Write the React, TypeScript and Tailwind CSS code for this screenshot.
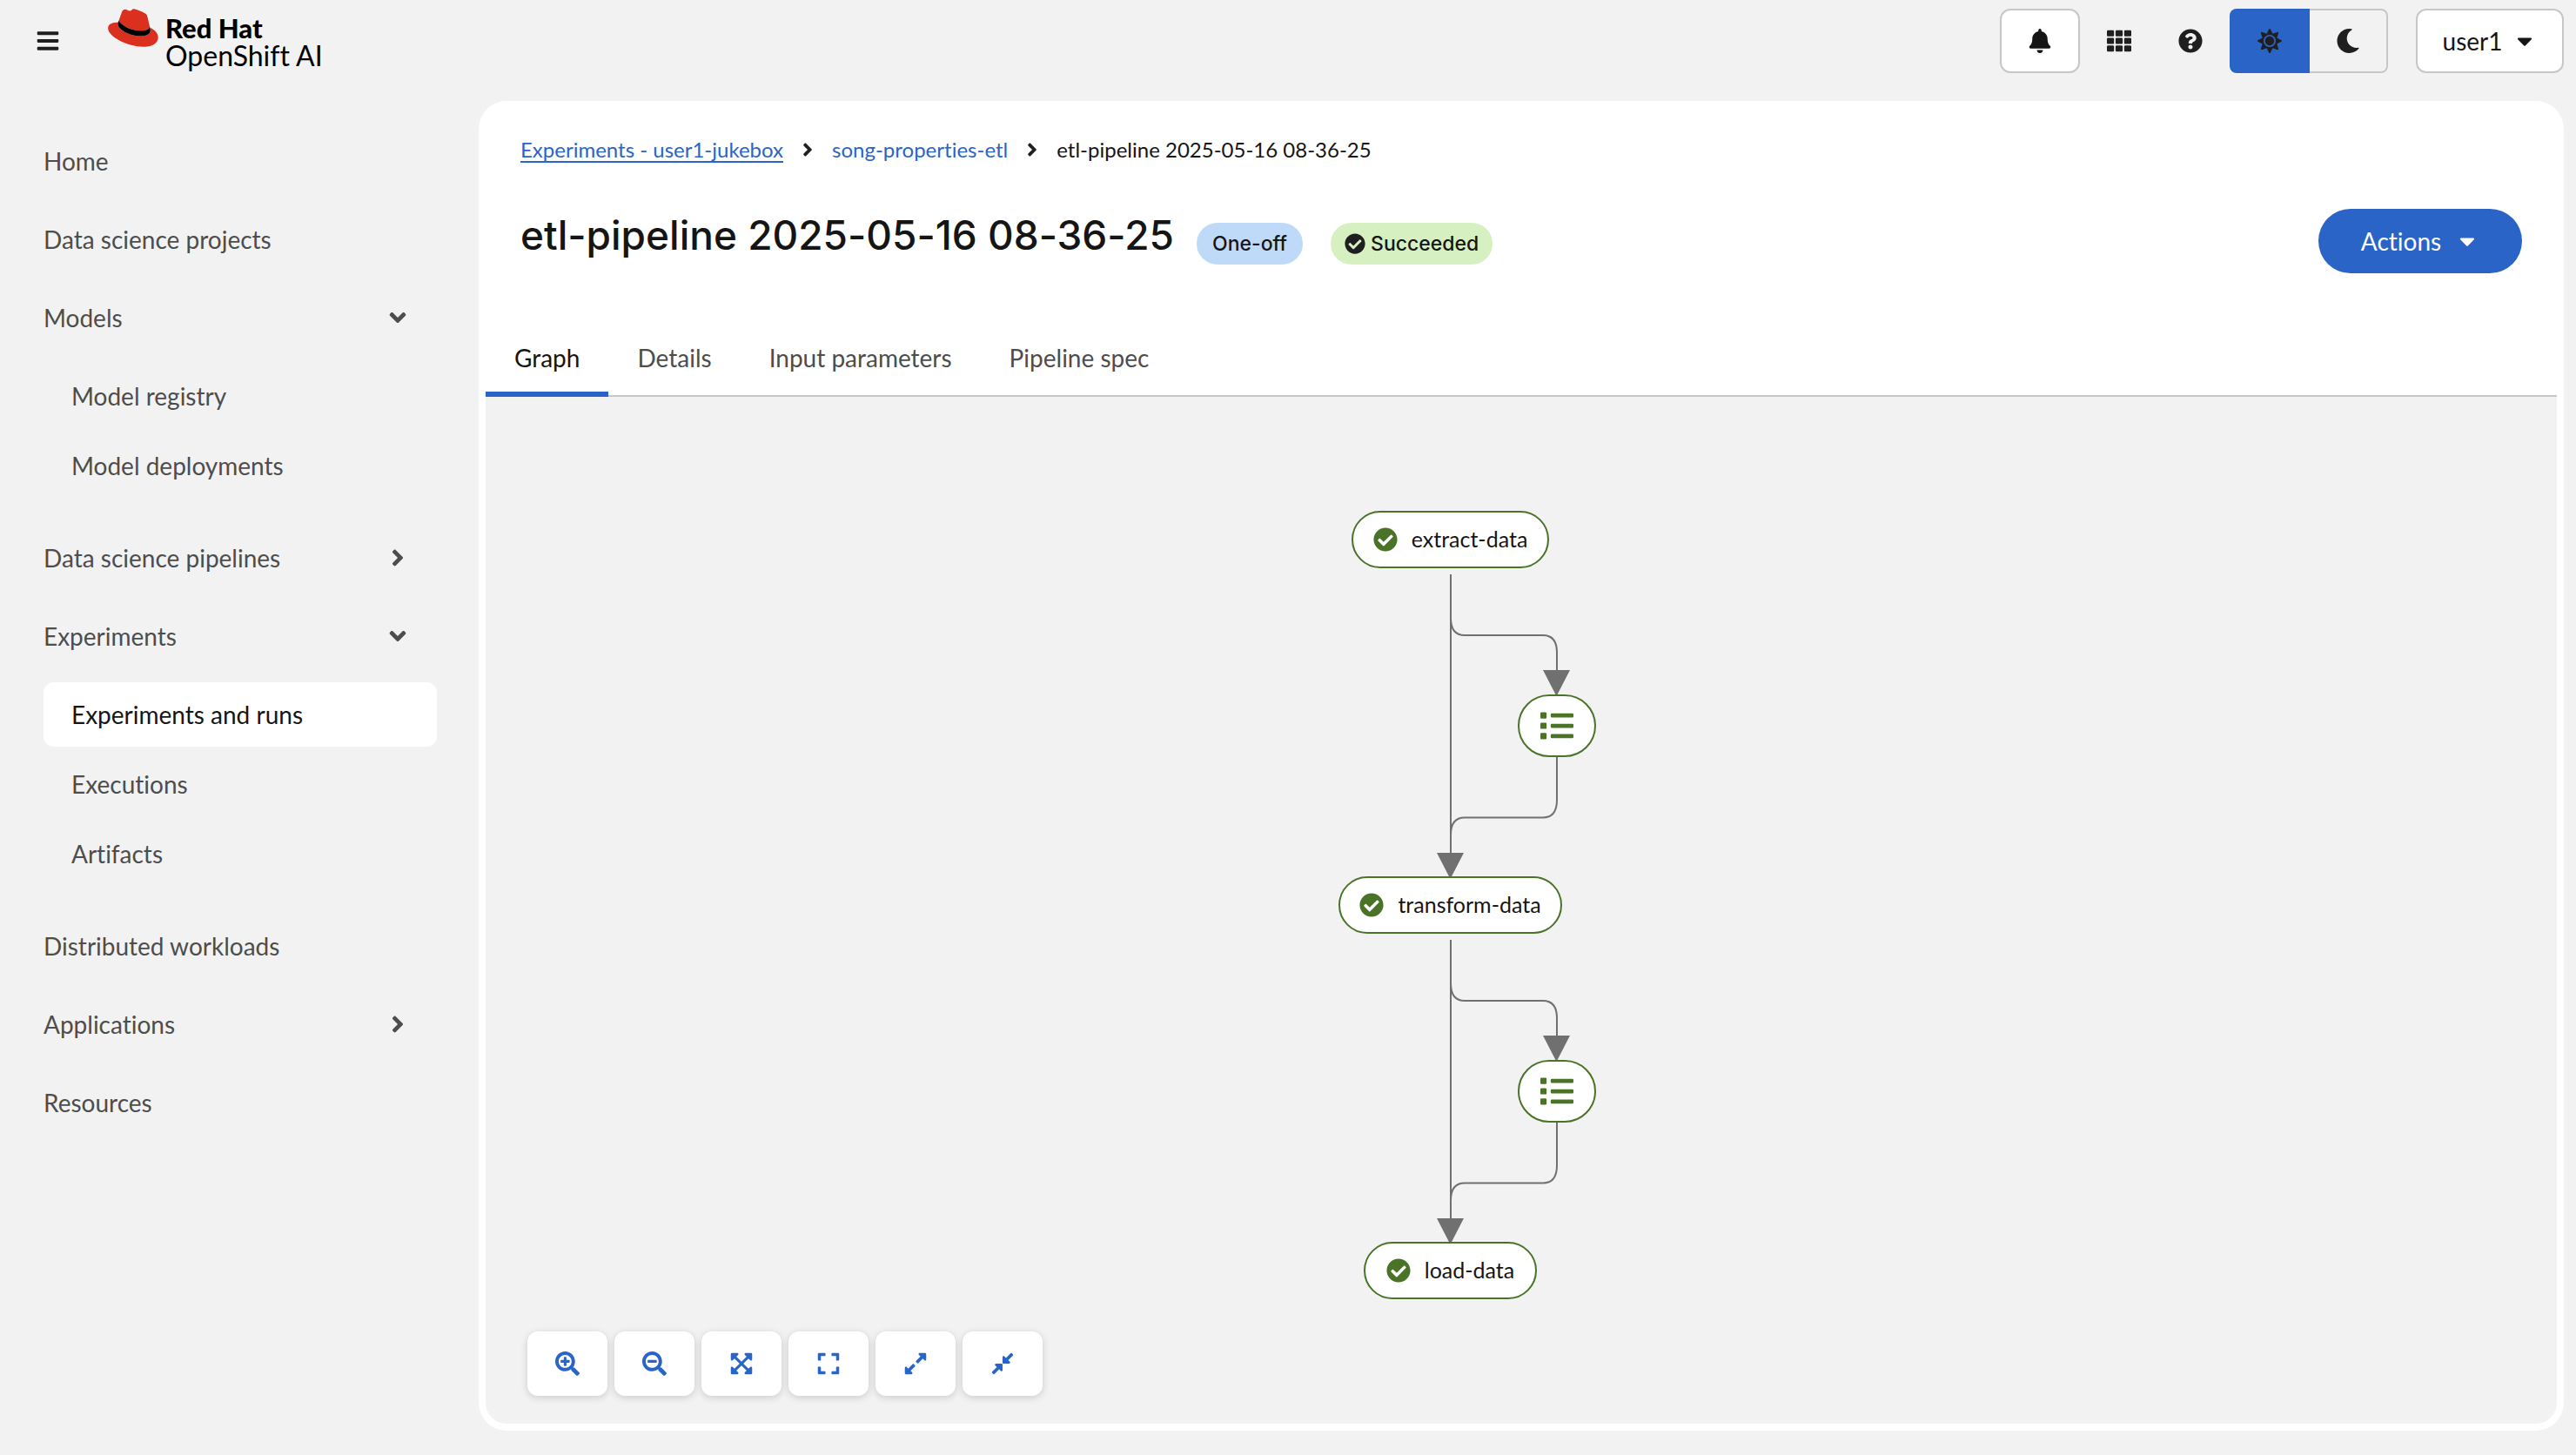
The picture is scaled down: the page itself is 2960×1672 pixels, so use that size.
import React from 'react';
import {
  FaAngleDown,
  FaAngleRight,
  FaBars,
  FaBell,
  FaCaretDown,
  FaCheckCircle,
  FaCompressAlt,
  FaExpand,
  FaExpandAlt,
  FaExpandArrowsAlt,
  FaList,
  FaMoon,
  FaQuestionCircle,
  FaSearchMinus,
  FaSearchPlus,
  FaSun,
  FaTh,
} from 'react-icons/fa';

type NavItem = { label: string; children?: string[]; expandable?: boolean };

const NAV: NavItem[] = [
  { label: 'Home' },
  { label: 'Data science projects' },
  { label: 'Models', expandable: true, children: ['Model registry', 'Model deployments'] },
  { label: 'Data science pipelines', expandable: true },
  { label: 'Experiments', expandable: true, children: ['Experiments and runs', 'Executions', 'Artifacts'] },
  { label: 'Distributed workloads' },
  { label: 'Applications', expandable: true },
  { label: 'Resources' },
];

const ACTIVE_ITEM = 'Experiments and runs';

function RedHatLogo() {
  return (
    <svg viewBox="0 0 192 145" className="h-[44px] w-[58px]" aria-hidden="true">
      <path
        fill="#db2f20"
        d="M127.47,83.49c12.51,0,30.61-2.58,30.61-17.46a14,14,0,0,0-.31-3.42l-7.45-32.36c-1.72-7.12-3.23-10.35-15.73-16.6C124.89,8.69,103.76.5,97.51.5,91.69.5,90,8,83.06,8c-6.68,0-11.64-5.6-17.89-5.6-6,0-9.91,4.09-12.93,12.5,0,0-8.41,23.72-9.49,27.16A6.43,6.43,0,0,0,42.53,44c0,9.22,36.3,39.45,84.94,39.45M160,72.07c1.73,8.19,1.73,9.05,1.73,10.13,0,14-15.74,21.77-36.43,21.77C78.54,104,37.58,76.6,37.58,58.49a18.45,18.45,0,0,1,1.51-7.33C22.27,52,.5,55,.5,74.22c0,31.48,74.59,70.28,133.65,70.28,45.28,0,56.7-20.48,56.7-36.65,0-12.72-11-27.16-30.83-35.78"
      />
      <path
        fill="#000000"
        d="M160,72.07c1.73,8.19,1.73,9.05,1.73,10.13,0,14-15.74,21.77-36.43,21.77C78.54,104,37.58,76.6,37.58,58.49a18.45,18.45,0,0,1,1.51-7.33l3.66-9.06A6.43,6.43,0,0,0,42.53,44c0,9.22,36.3,39.45,84.94,39.45,12.51,0,30.61-2.58,30.61-17.46a14,14,0,0,0-.31-3.42Z"
      />
    </svg>
  );
}

function Header() {
  return (
    <header className="flex h-[116px] items-start justify-between pr-[14px] pl-[40px] pt-[10px]">
      <div className="flex items-start">
        <button type="button" aria-label="Global navigation" className="flex h-[74px] w-[30px] items-center justify-center text-[28px] text-[#1f1f1f]">
          <FaBars />
        </button>
        <a href="#home" aria-label="Red Hat OpenShift AI" className="ml-[54px] flex items-start gap-2 text-black">
          <RedHatLogo />
          <span className="flex flex-col pt-[6px] text-[32px] leading-[32px]">
            <span className="font-black text-[31px]">Red Hat</span>
            <span>OpenShift AI</span>
          </span>
        </a>
      </div>
      <div className="flex items-center text-[28px] text-[#1f1f1f]">
        <button type="button" aria-label="Notifications" className="flex h-[74px] w-[92px] items-center justify-center rounded-xl border-2 border-[#c7c7c7] bg-white text-[#151515]">
          <FaBell />
        </button>
        <button type="button" aria-label="Application launcher" className="ml-1 flex h-[74px] w-[82px] items-center justify-center">
          <FaTh />
        </button>
        <button type="button" aria-label="Help" className="flex h-[74px] w-[82px] items-center justify-center">
          <FaQuestionCircle />
        </button>
        <div role="group" aria-label="Theme" className="ml-1 flex">
          <button type="button" aria-label="Light theme" aria-pressed="true" className="flex h-[74px] w-[92px] items-center justify-center rounded-l-lg bg-[#2a64c6]">
            <FaSun />
          </button>
          <button type="button" aria-label="Dark theme" aria-pressed="false" className="flex h-[74px] w-[90px] items-center justify-center rounded-r-lg border-2 border-l-0 border-[#c7c7c7]">
            <FaMoon />
          </button>
        </div>
        <button type="button" className="ml-8 flex h-[74px] w-[170px] items-center justify-center gap-3 rounded-xl border-2 border-[#c7c7c7] bg-white text-[#151515]">
          user1
          <FaCaretDown />
        </button>
      </div>
    </header>
  );
}

function Sidebar() {
  return (
    <nav aria-label="Main" className="w-[550px] shrink-0 pr-12 pl-[50px] pt-8 text-[28px] text-[#4d4d4d]">
      <ul className="flex flex-col gap-4">
        {NAV.map((item) => (
          <li key={item.label}>
            {item.expandable ? (
              <button type="button" aria-expanded={Boolean(item.children)} className="flex h-[74px] w-full items-center justify-between pr-[30px]">
                {item.label}
                {item.children ? <FaAngleDown className="text-[30px]" /> : <FaAngleRight className="text-[30px]" />}
              </button>
            ) : (
              <a href="#nav" className="flex h-[74px] items-center">
                {item.label}
              </a>
            )}
            {item.children && (
              <ul className="flex flex-col gap-[6px] pt-4 pb-4">
                {item.children.map((child) => (
                  <li key={child}>
                    <a
                      href="#nav"
                      aria-current={child === ACTIVE_ITEM ? 'page' : undefined}
                      className={
                        child === ACTIVE_ITEM
                          ? 'flex h-[74px] items-center rounded-xl bg-white px-8 text-[#151515]'
                          : 'flex h-[74px] items-center px-8'
                      }
                    >
                      {child}
                    </a>
                  </li>
                ))}
              </ul>
            )}
          </li>
        ))}
      </ul>
    </nav>
  );
}

function Breadcrumb() {
  return (
    <nav aria-label="Breadcrumb" className="text-[24px] leading-9">
      <ol className="flex items-center gap-4">
        <li>
          <a href="#experiments" className="text-[#2a64c6] underline decoration-2 underline-offset-4">
            Experiments - user1-jukebox
          </a>
        </li>
        <li className="flex items-center gap-4">
          <FaAngleRight className="text-[#1f1f1f]" />
          <a href="#song-properties-etl" className="text-[#2a64c6]">
            song-properties-etl
          </a>
        </li>
        <li className="flex items-center gap-4">
          <FaAngleRight className="text-[#1f1f1f]" />
          <span aria-current="page">etl-pipeline 2025-05-16 08-36-25</span>
        </li>
      </ol>
    </nav>
  );
}

function Tabs() {
  const tabs = ['Graph', 'Details', 'Input parameters', 'Pipeline spec'];
  return (
    <div role="tablist" className="flex border-b-2 border-[#c7c7c7] text-[28px]">
      {tabs.map((tab, i) => (
        <button
          key={tab}
          type="button"
          role="tab"
          aria-selected={i === 0}
          className={
            i === 0
              ? '-mb-[2px] border-b-[6px] border-[#2a64c6] px-[33px] pt-5 pb-[18px] text-[#151515]'
              : '-mb-[2px] px-[33px] pt-5 pb-6 text-[#4d4d4d]'
          }
        >
          {tab}
        </button>
      ))}
    </div>
  );
}

function TaskNode({ label, className }: { label: string; className: string }) {
  return (
    <div className={`absolute flex h-[66px] items-center justify-center gap-4 rounded-full border-2 border-[#4a7328] bg-white text-[25px] text-[#151515] ${className}`}>
      <FaCheckCircle className="text-[28px] text-[#4a7328]" />
      {label}
    </div>
  );
}

function ArtifactNode({ className }: { className: string }) {
  return (
    <div className={`absolute flex h-[72px] w-[90px] items-center justify-center rounded-full border-2 border-[#4a7328] bg-white text-[38px] text-[#4a7328] ${className}`}>
      <FaList />
    </div>
  );
}

function Edges({ className }: { className: string }) {
  return (
    <svg viewBox="0 0 170 350" className={`absolute h-[350px] w-[170px] ${className}`} aria-hidden="true">
      <g fill="none" stroke="#707070" strokeWidth="2">
        <path d="M17 0V322" />
        <path d="M17 0V50Q17 70 33 70H123Q139 70 139 90V112" />
        <path d="M139 209V259Q139 279.500 123 279.500H33Q17 279.500 17 299.500V322" />
      </g>
      <path fill="#707070" d="M123 110H154L138.500 140Z M1 320H32L16.500 350Z" />
    </svg>
  );
}

function GraphToolbar() {
  const tools = [
    { label: 'Zoom in', Icon: FaSearchPlus },
    { label: 'Zoom out', Icon: FaSearchMinus },
    { label: 'Fit to screen', Icon: FaExpandArrowsAlt },
    { label: 'Reset view', Icon: FaExpand },
    { label: 'Expand all', Icon: FaExpandAlt },
    { label: 'Collapse all', Icon: FaCompressAlt },
  ];
  return (
    <div className="flex gap-2 pb-8 pl-12">
      {tools.map(({ label, Icon }) => (
        <button
          key={label}
          type="button"
          aria-label={label}
          className="flex h-[74px] w-[92px] items-center justify-center rounded-xl bg-white text-[28px] text-[#2a64c6] shadow-[0_2px_8px_rgba(0,0,0,0.16)]"
        >
          <Icon />
        </button>
      ))}
    </div>
  );
}

function Graph() {
  return (
    <section aria-label="Pipeline graph" className="relative flex flex-1 flex-col justify-end overflow-hidden rounded-b-3xl bg-[#f2f2f2]">
      <Edges className="top-[204px] left-[1092px]" />
      <Edges className="top-[624px] left-[1092px]" />
      <TaskNode label="extract-data" className="top-[131px] left-[995px] w-[227px]" />
      <ArtifactNode className="top-[342px] left-[1186px]" />
      <TaskNode label="transform-data" className="top-[551px] left-[980px] w-[257px]" />
      <ArtifactNode className="top-[762px] left-[1186px]" />
      <TaskNode label="load-data" className="top-[971px] left-[1009px] w-[199px]" />
      <GraphToolbar />
    </section>
  );
}

export default function App() {
  return (
    <div className="flex min-h-screen flex-col bg-[#f2f2f2] font-[Lato,sans-serif] text-[#151515] [font-variant-ligatures:none]">
      <Header />
      <div className="flex flex-1">
        <Sidebar />
        <main className="mr-[14px] mb-7 flex min-w-0 flex-1 flex-col rounded-[32px] bg-white p-2 pt-[38px]">
          <div className="px-10">
            <Breadcrumb />
            <div className="mt-[50px] flex items-start justify-between">
              <div className="flex items-start">
                <h1 className="font-[Inter,sans-serif] text-[46px] leading-[60px] font-medium">etl-pipeline 2025-05-16 08-36-25</h1>
                <span className="mt-4 ml-[26px] flex h-12 items-center rounded-full bg-[#bfdaf9] px-[18px] font-[Inter,sans-serif] text-[23px] font-medium">One-off</span>
                <span className="mt-4 ml-8 flex h-12 items-center gap-[6px] rounded-full bg-[#d6f0c1] px-4 font-[Inter,sans-serif] text-[23px] font-medium">
                  <FaCheckCircle className="text-[24px] text-[#1f1f1f]" />
                  Succeeded
                </span>
              </div>
              <button type="button" className="flex h-[74px] w-[234px] items-center justify-center gap-4 rounded-full bg-[#2a64c6] text-[28px] text-white">
                Actions
                <FaCaretDown />
              </button>
            </div>
          </div>
          <div className="mt-14">
            <Tabs />
          </div>
          <Graph />
        </main>
      </div>
    </div>
  );
}
